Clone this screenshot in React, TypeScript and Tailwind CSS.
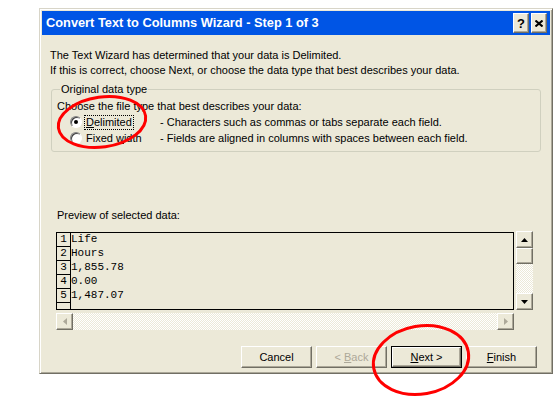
import React from "react";

const ui = "font-['Liberation_Sans',Arial,sans-serif] text-[11px] text-black";
const mono = "font-['Liberation_Mono','Courier_New',monospace] text-[11px] text-black";

// classic raised 3D bevel
const raised =
  "bg-[#ece9d8] border border-t-white border-l-white border-r-[#716f64] border-b-[#716f64] shadow-[inset_-1px_-1px_0_#aca899]";
const checker =
  "bg-[repeating-conic-gradient(#ffffff_0%_25%,#ece9d8_0%_50%)] bg-[length:2px_2px]";

function Arrow({ dir, disabled = false }: { dir: "up" | "down" | "left" | "right"; disabled?: boolean }) {
  const fill = disabled ? "#aca899" : "#000000";
  const pts = {
    up: "0,4 7,4 3.5,0",
    down: "0,0 7,0 3.5,4",
    left: "4,0 4,7 0,3.5",
    right: "0,0 0,7 4,3.5",
  }[dir];
  const vertical = dir === "up" || dir === "down";
  return (
    <svg width={vertical ? 7 : 4} height={vertical ? 4 : 7} viewBox={vertical ? "0 0 7 4" : "0 0 4 7"}>
      <polygon points={pts} fill={fill} />
    </svg>
  );
}

function ScrollBtn({ dir, disabled }: { dir: "up" | "down" | "left" | "right"; disabled?: boolean }) {
  return (
    <div className={`${raised} w-[17px] h-[17px] shrink-0 flex items-center justify-center`}>
      <Arrow dir={dir} disabled={disabled} />
    </div>
  );
}

function Radio({ checked }: { checked?: boolean }) {
  return (
    <div className="w-[12px] h-[12px] rounded-full bg-white border border-[#808080] border-r-white border-b-white shadow-[inset_1px_1px_0_#404040] flex items-center justify-center shrink-0">
      {checked && <div className="w-[4px] h-[4px] rounded-full bg-black" />}
    </div>
  );
}

function Button({ children, isDefault, disabled }: { children: React.ReactNode; isDefault?: boolean; disabled?: boolean }) {
  const label = (
    <div
      className={`${raised} w-full h-full flex items-center justify-center ${
        disabled ? "text-[#aca899]" : "text-black"
      }`}
    >
      {children}
    </div>
  );
  if (isDefault) {
    return <div className="w-[71px] h-[22px] border border-black">{label}</div>;
  }
  return <div className="w-[71px] h-[22px]">{label}</div>;
}

const rows = [
  ["1", "Life"],
  ["2", "Hours"],
  ["3", "1,855.78"],
  ["4", "0.00"],
  ["5", "1,487.07"],
  ["", ""],
];

export default function App() {
  return (
    <div className={`${ui} relative w-[560px] h-[409px] bg-white pt-[8px] pl-[39px]`}>
      {/* Dialog */}
      <div className="w-[514px] h-[366px] border border-[#d8d5c8] border-r-[#716f64] border-b-[#716f64] p-[2px] bg-[#ece9d8] shadow-[inset_1px_1px_0_#ffffff,inset_-1px_-1px_0_#aca899] flex flex-col">
        {/* Title bar */}
        <div className="h-[24px] bg-[#0055e5] flex items-center justify-between pl-[4px] pr-[3px] shrink-0">
          <span className="text-white font-bold text-[12.8px]">
            Convert Text to Columns Wizard - Step 1 of 3
          </span>
          <div className="flex gap-[2px]">
            <div className={`${raised} w-[16px] h-[20px] flex items-center justify-center font-bold text-[13px] leading-none`}>
              ?
            </div>
            <div className={`${raised} w-[16px] h-[20px] flex items-center justify-center`}>
              <svg width="8" height="7" viewBox="0 0 8 7">
                <path d="M0.5 0.5 L7.5 6.5 M7.5 0.5 L0.5 6.5" stroke="#000" strokeWidth="2" />
              </svg>
            </div>
          </div>
        </div>

        {/* Body */}
        <div className="pl-[8px] pr-[9px] pt-[13px] leading-[15px]">
          <p>The Text Wizard has determined that your data is Delimited.</p>
          <p>If this is correct, choose Next, or choose the data type that best describes your data.</p>

          <fieldset className="mt-[4px] ml-[1px] border border-[#d0d0bf] rounded-[3px] pl-[5px] pb-[5px] leading-[16px]">
            <legend className="ml-[3px] px-[1px] leading-[14px]">Original data type</legend>
            <p className="mt-[2px]">Choose the file type that best describes your data:</p>
            <div className="flex items-center h-[16px]">
              <div className="w-[103px] pl-[13px] flex items-center gap-[2px]">
                <Radio checked />
                <span className="border border-dotted border-black px-[1px] leading-[13px]">
                  <span className="underline">D</span>elimited
                </span>
              </div>
              <span>- Characters such as commas or tabs separate each field.</span>
            </div>
            <div className="flex items-center h-[16px]">
              <div className="w-[103px] pl-[13px] flex items-center gap-[3px]">
                <Radio />
                <span className="px-[1px]">
                  Fixed <span className="underline">w</span>idth
                </span>
              </div>
              <span>- Fields are aligned in columns with spaces between each field.</span>
            </div>
          </fieldset>

          {/* Preview */}
          <div className="pl-[6px] mt-[56px]">
            <p className="ml-[1px]">Preview of selected data:</p>
            <div className="flex items-start gap-[2px] mt-[9px]">
              <div className="w-[458px] h-[78px] border border-black overflow-hidden">
                {rows.map(([n, t], i) => (
                  <div key={i} className={`${mono} flex h-[14px]`}>
                    <div className="w-[14px] border-r border-b border-black text-center leading-[13px] shrink-0">{n}</div>
                    <div className="leading-[13px] whitespace-pre">{t}</div>
                  </div>
                ))}
              </div>
              <div className="w-[17px] h-[79px] flex flex-col -mt-[1px]">
                <ScrollBtn dir="up" />
                <div className={`${raised} h-[16px] shrink-0`} />
                <div className={`${checker} flex-1`} />
                <ScrollBtn dir="down" />
              </div>
            </div>
            <div className={`w-[458px] h-[17px] flex mt-[3px] ${checker}`}>
              <ScrollBtn dir="left" disabled />
              <div className="flex-1" />
              <ScrollBtn dir="right" disabled />
            </div>
          </div>
        </div>

        {/* Buttons */}
        <div className="flex justify-end gap-[4px] pr-[13px] mt-[16px]">
          <Button>Cancel</Button>
          <Button disabled>
            &lt; <span className="underline ml-[3px]">B</span>ack
          </Button>
          <Button isDefault>
            <span className="underline">N</span>ext &gt;
          </Button>
          <Button>
            <span className="underline">F</span>inish
          </Button>
        </div>
      </div>

      {/* Red annotation circles */}
      <svg className="absolute inset-0 pointer-events-none" width="560" height="409" viewBox="0 0 560 409">
        <ellipse cx="102" cy="122" rx="44" ry="25" transform="rotate(-8 102 122)" fill="none" stroke="#ff0000" strokeWidth="3" />
        <ellipse cx="421" cy="360" rx="48" ry="34" transform="rotate(-10 421 360)" fill="none" stroke="#ff0000" strokeWidth="3" />
      </svg>
    </div>
  );
}
